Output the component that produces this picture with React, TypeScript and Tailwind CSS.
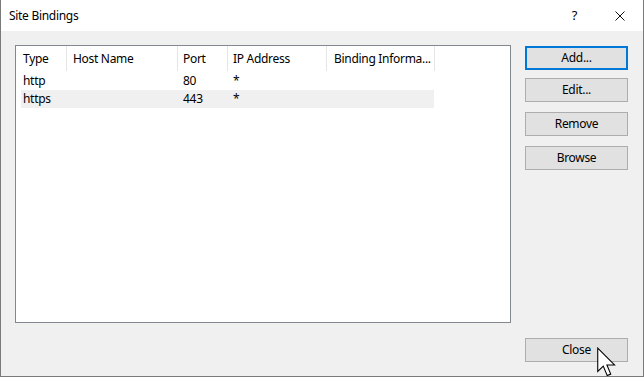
import React from 'react';

const font = {
  fontFamily: '"Segoe UI", "Noto Sans", "Liberation Sans", sans-serif',
  letterSpacing: '-0.3px',
};

const columns = [
  { label: 'Type', width: 'w-[51px]', pad: 'pl-[7px]' },
  { label: 'Host Name', width: 'w-[111px]', pad: 'pl-[6px]' },
  { label: 'Port', width: 'w-[50px]', pad: 'pl-[5px]' },
  { label: 'IP Address', width: 'w-[99px]', pad: 'pl-[5px]' },
  { label: 'Binding Informa...', width: 'w-[108px]', pad: 'pl-[7px]' },
];

const bindings = [
  { type: 'http', host: '', port: '80', ip: '*', info: '' },
  { type: 'https', host: '', port: '443', ip: '*', info: '' },
];

const Button: React.FC<{ label: string; primary?: boolean; className?: string }> = ({
  label,
  primary,
  className = '',
}) => (
  <button
    className={`w-[103px] h-[24px] bg-[#e1e1e1] text-[12px] text-black flex items-center justify-center ${
      primary ? 'border-2 border-[#0078d7]' : 'border border-[#adadad]'
    } ${className}`}
  >
    {label}
  </button>
);

export default function App() {
  return (
    <div style={font} className="relative w-[644px] h-[377px] border border-[#7a7a7a] border-t-0 bg-[#f0f0f0] flex flex-col overflow-hidden">
      {/* Title bar */}
      <div className="h-[31px] bg-white flex items-center shrink-0">
        <span className="ml-[8px] text-[12px] text-black">Site Bindings</span>
        <div className="ml-auto flex items-center">
          <span className="text-[13px] text-black mr-[38px]">?</span>
          <svg width="10" height="10" viewBox="0 0 10 10" className="mr-[18px]">
            <path d="M0.5 0.5 L9.5 9.5 M9.5 0.5 L0.5 9.5" stroke="#111" strokeWidth="1" fill="none" />
          </svg>
        </div>
      </div>

      {/* Body */}
      <div className="flex-1 flex flex-col pt-[14px] pb-[14px] pl-[14px] pr-[15px]">
        <div className="flex gap-[14px]">
          {/* List view */}
          <div className="w-[496px] h-[278px] border border-[#828790] bg-white">
            <div className="flex h-[25px]">
              {columns.map((c) => (
                <div
                  key={c.label}
                  className={`${c.width} ${c.pad} h-full flex items-center whitespace-nowrap text-[12px] text-black border-r border-[#e5e5e5]`}
                >
                  {c.label}
                </div>
              ))}
            </div>
            <div className="pl-[5px] pt-[1px]">
              {bindings.map((b, r) => (
                <div
                  key={b.type}
                  className={`flex h-[18px] w-[413px] items-center text-[12px] text-black ${
                    r === 1 ? 'bg-[#f0f0f0]' : ''
                  }`}
                >
                  <div className="w-[50px] pl-[2px]">{b.type}</div>
                  <div className="w-[110px] pl-[2px]">{b.host}</div>
                  <div className="w-[50px] pl-[2px]">{b.port}</div>
                  <div className="w-[100px] pl-[2px]">{b.ip}</div>
                  <div className="flex-1 pl-[2px]">{b.info}</div>
                </div>
              ))}
            </div>
          </div>

          {/* Buttons */}
          <div className="flex flex-col pt-[1px]">
            <Button label="Add..." primary />
            <Button label="Edit..." className="mt-[8px]" />
            <Button label="Remove" className="mt-[10px]" />
            <Button label="Browse" className="mt-[10px]" />
          </div>
        </div>

        <div className="mt-auto flex justify-end">
          <Button label="Close" />
        </div>
      </div>

      {/* Mouse pointer */}
      <svg
        width="19"
        height="30"
        viewBox="0 0 13 20"
        className="absolute left-[596px] top-[347px]"
      >
        <path
          d="M0.5 0.5 V16.5 L4.3 12.8 L7 19.3 L9.4 18.3 L6.8 12 H12 Z"
          fill="white"
          stroke="black"
          strokeWidth="0.75"
          strokeLinejoin="miter"
        />
      </svg>
    </div>
  );
}
